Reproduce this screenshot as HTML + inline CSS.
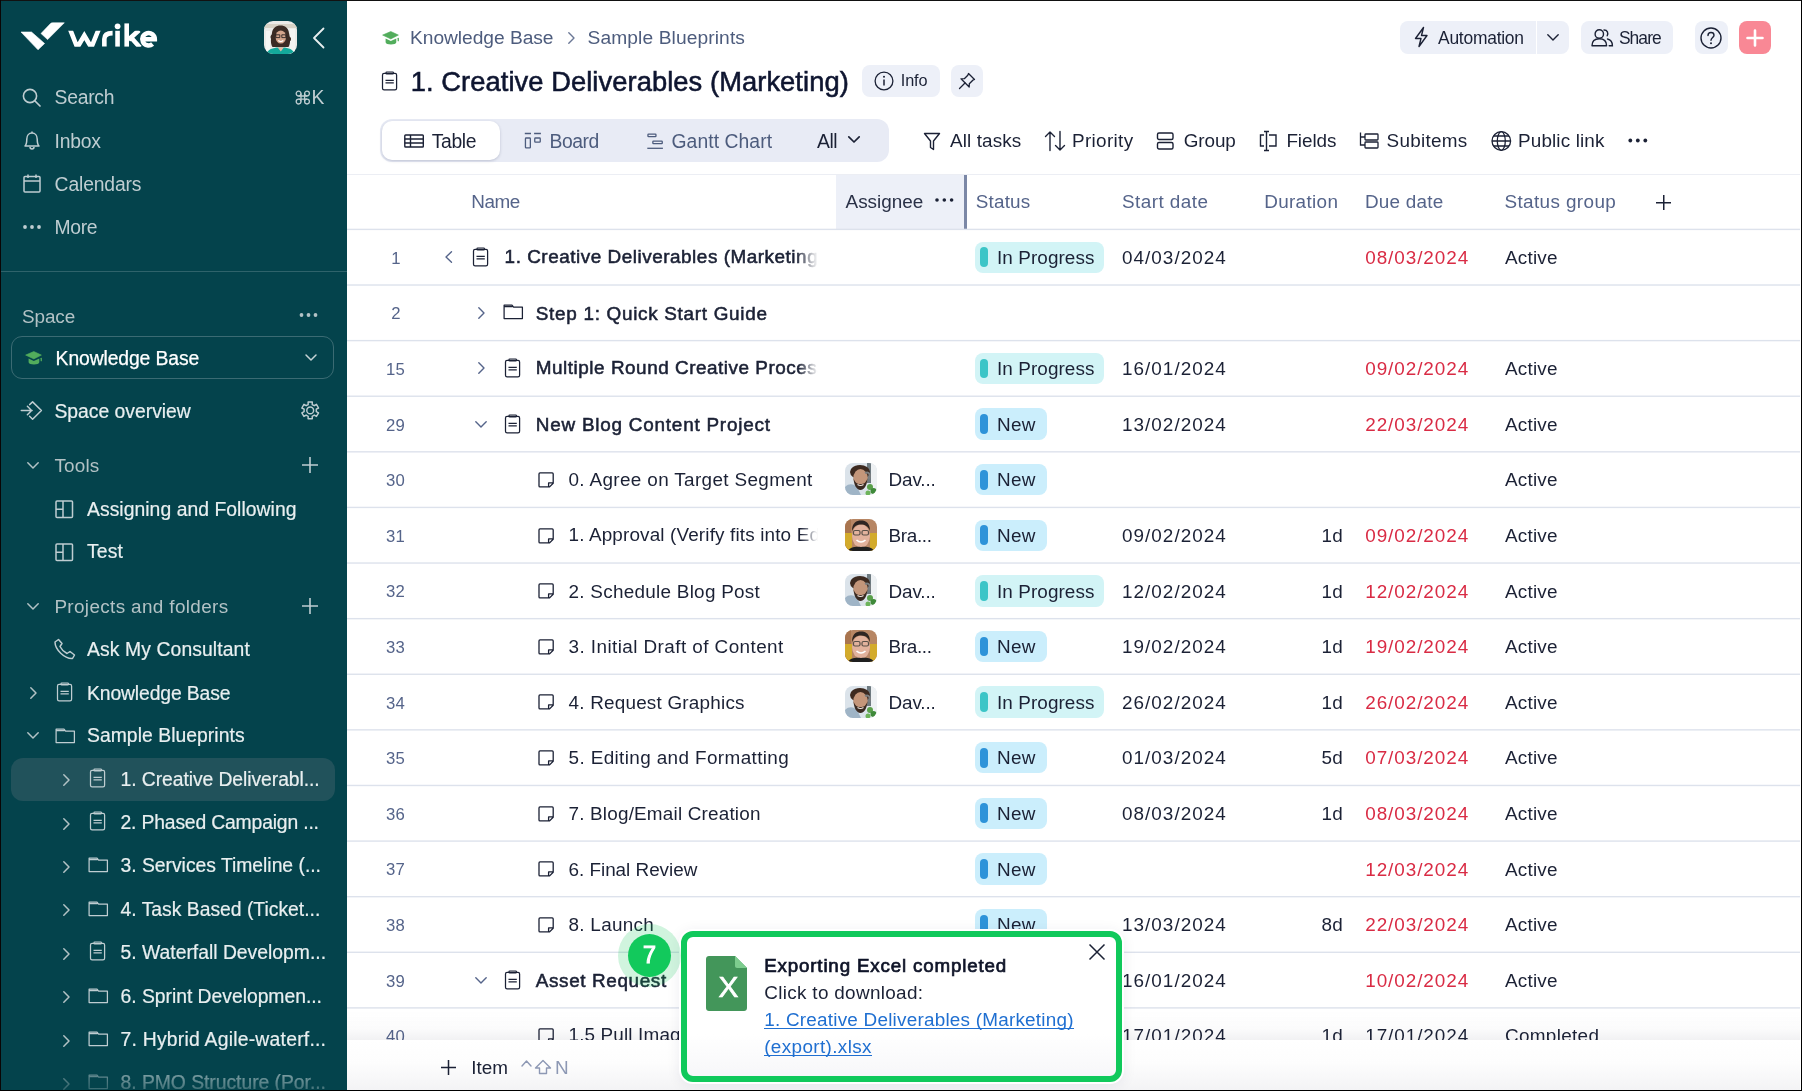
<!DOCTYPE html>
<html><head><meta charset="utf-8"><style>
html,body{margin:0;padding:0;}
body{width:1802px;height:1091px;position:relative;overflow:hidden;background:#fff;font-family:"Liberation Sans",sans-serif;}
.t{position:absolute;white-space:nowrap;line-height:1;}
.r{position:absolute;}
#w{position:absolute;left:0;top:0;width:1802px;height:1091px;overflow:hidden;will-change:transform;}
</style></head><body><div id="w">
<div class="r" style="left:0px;top:0px;width:347px;height:1091px;background:#04434c;"></div>
<div class="r" style="left:0px;top:271px;width:347px;height:1.1999999999999886px;background:#2f636b;"></div>
<svg class="r" style="left:20px;top:21px;" width="46" height="30" viewBox="0 0 46 30" fill="none"><path d="M1 11 H11.5 L24.6 22.5 L18 28.8 Z" fill="#fff" stroke="#fff" stroke-width="0.6" stroke-linejoin="round"/><path d="M21 12.5 L30.5 2.6 Q31.2 1.8 32.5 1.8 H44.3 L27.6 18.6 Z" fill="#fff" stroke="#fff" stroke-width="0.6" stroke-linejoin="round"/></svg>
<svg class="r" style="left:64px;top:18px;" width="98" height="34" viewBox="0 0 98 34" fill="none"><defs><clipPath id="wc"><rect x="0" y="12.7" width="98" height="16"/></clipPath></defs><g stroke="#fff" stroke-width="4.6" fill="none"><path clip-path="url(#wc)" d="M5.8 10.5 L13.3 29.5 L20.3 17.5 L27.3 29.5 L35 10.5" stroke-linejoin="miter" stroke-miterlimit="4"/><path d="M40.35 28.6 V21 Q40.35 15.1 48.6 15.1"/><path d="M53.55 12.8 V28.6"/><path d="M62.7 5.4 V28.6"/><path clip-path="url(#wc)" d="M64.5 21.8 L75 12.2 M66.8 19.3 L76 29.5"/><path d="M79.3 21.3 H90.8 A6.25 6.25 0 1 0 88.6 26" /></g><circle cx="53.6" cy="8.3" r="2.9" fill="#fff"/></svg>
<svg class="r" style="left:264px;top:21px;" width="33" height="33" viewBox="0 0 33 33" fill="none"><defs><clipPath id="ua"><rect width="33" height="33" rx="9"/></clipPath></defs><g clip-path="url(#ua)"><rect width="33" height="33" fill="#ecebe8"/><rect x="0" y="3" width="33" height="4" fill="#d8d2c6"/><rect x="2" y="10" width="4" height="20" fill="#f6f6f4"/><rect x="26" y="8" width="5" height="25" fill="#f4f4f2"/><path d="M8.5 26 C6 22 7 17 8 12 C8.5 7 12 4.5 16.5 4.5 C21 4.5 24.5 7 25 12 C26 17 27 22 24.5 26 Z" fill="#3b2b24"/><circle cx="9" cy="16" r="2.5" fill="#3b2b24"/><circle cx="24.5" cy="18" r="2.5" fill="#3b2b24"/><ellipse cx="16.8" cy="16" rx="5.2" ry="6.6" fill="#d4a58c"/><path d="M11.8 13.8 H15.8 V16.6 H11.8 Z M17.8 13.8 H21.8 V16.6 H17.8 Z" stroke="#2a2222" stroke-width="0.9" fill="none"/><path d="M14.3 19.6 Q16.8 21.6 19.3 19.6" stroke="#fff" stroke-width="1.3" fill="none"/><path d="M2 33 C4 28 10 26 16.8 26.5 C23.5 26 29 28 31 33 Z" fill="#14a99b"/><path d="M13.5 26.3 L16.8 30.5 L20 26.3 Z" fill="#e2bba6"/></g></svg>
<svg class="r" style="left:311px;top:27px;" width="15" height="22" viewBox="0 0 15 22" fill="none"><path d="M12.5 1.5 L3 11 L12.5 20.5" stroke="#e8eeef" stroke-width="1.8" stroke-linecap="round" stroke-linejoin="round"/></svg>
<svg class="r" style="left:22px;top:88px;" width="20" height="20" viewBox="0 0 20 20" fill="none"><circle cx="8" cy="8" r="6.6" stroke="#bfcdd1" stroke-width="1.6"/><path d="M13 13 L18 18" stroke="#bfcdd1" stroke-width="1.7" stroke-linecap="round"/></svg>
<div class="t" style="left:54.60px;top:88.00px;font-size:19.33px;color:#bfcdd1;letter-spacing:-0.280px;">Search</div>
<svg class="r" style="left:294.5px;top:89.5px;" width="16" height="16" viewBox="0 0 16 16" fill="none"><g stroke="#bfcdd1" stroke-width="1.3" fill="none"><circle cx="3.6" cy="3.6" r="2.4"/><circle cx="12" cy="3.6" r="2.4"/><circle cx="3.6" cy="11.6" r="2.4"/><circle cx="12" cy="11.6" r="2.4"/><path d="M6 3.6 V11.6 M9.6 3.6 V11.6 M3.6 6 H12 M3.6 9.2 H12"/></g></svg>
<div class="t" style="left:311.40px;top:88.00px;font-size:19.33px;color:#bfcdd1;">K</div>
<svg class="r" style="left:22px;top:130px;" width="20" height="22" viewBox="0 0 20 22" fill="none"><path d="M3 16 C4.6 14.5 4.8 12.5 4.8 9 C4.8 5.5 7 3 10 3 C13 3 15.2 5.5 15.2 9 C15.2 12.5 15.4 14.5 17 16 Z" stroke="#bfcdd1" stroke-width="1.5" stroke-linejoin="round"/><path d="M8 17 C8 19.5 12 19.5 12 17" stroke="#bfcdd1" stroke-width="1.5"/><path d="M10 1.5 V3" stroke="#bfcdd1" stroke-width="1.5"/></svg>
<div class="t" style="left:54.60px;top:132.00px;font-size:19.33px;color:#bfcdd1;letter-spacing:-0.225px;">Inbox</div>
<svg class="r" style="left:22px;top:173px;" width="20" height="22" viewBox="0 0 20 22" fill="none"><rect x="2" y="3.5" width="16" height="15.5" rx="1" stroke="#bfcdd1" stroke-width="1.5"/><path d="M2 8 H18 M6 1.5 V5 M14 1.5 V5" stroke="#bfcdd1" stroke-width="1.5"/></svg>
<div class="t" style="left:54.60px;top:175.00px;font-size:19.33px;color:#bfcdd1;letter-spacing:-0.150px;">Calendars</div>
<svg class="r" style="left:22px;top:220px;" width="20" height="14" viewBox="0 0 20 14" fill="none"><circle cx="3" cy="7" r="1.9" fill="#bfcdd1"/><circle cx="10" cy="7" r="1.9" fill="#bfcdd1"/><circle cx="17" cy="7" r="1.9" fill="#bfcdd1"/></svg>
<div class="t" style="left:54.60px;top:218.00px;font-size:19.33px;color:#bfcdd1;letter-spacing:-0.367px;">More</div>
<div class="t" style="left:22.00px;top:308.00px;font-size:18.90px;color:#b3c2c5;letter-spacing:-0.100px;">Space</div>
<svg class="r" style="left:298px;top:309px;" width="22" height="12" viewBox="0 0 22 12" fill="none"><circle cx="3.5" cy="6" r="1.9" fill="#b3c2c5"/><circle cx="10.5" cy="6" r="1.9" fill="#b3c2c5"/><circle cx="17.5" cy="6" r="1.9" fill="#b3c2c5"/></svg>
<div class="r" style="left:11px;top:336px;width:321px;height:41px;border:1.4px solid #3b6b73;border-radius:11px;"></div>
<svg class="r" style="left:24.6px;top:350.5px;" width="18" height="15" viewBox="0 0 18 15" fill="none"><path d="M0.6 4.1 L8.8 0.5 L16.4 4.1 L8.8 7.9 Z" fill="#52ad5c" stroke="#52ad5c" stroke-width="0.6" stroke-linejoin="round"/><path d="M3.6 7.6 L8.8 10.1 L14.3 7.6 V11.3 C14.3 14.2 3.6 14.2 3.6 11.3 Z" fill="#52ad5c"/><rect x="15.6" y="6.7" width="1.3" height="3.6" rx="0.6" fill="#52ad5c"/></svg>
<div class="t" style="left:55.60px;top:349.00px;font-size:19.33px;color:#ffffff;-webkit-text-stroke:0.25px #ffffff;letter-spacing:-0.108px;">Knowledge Base</div>
<svg class="r" style="left:304px;top:353px;" width="14" height="9" viewBox="0 0 14 9" fill="none"><path d="M2 2 L7 7 L12 2" stroke="#c6d3d5" stroke-width="1.5" stroke-linecap="round" stroke-linejoin="round"/></svg>
<svg class="r" style="left:20px;top:400px;" width="23" height="21" viewBox="0 0 23 21" fill="none"><path d="M9.6 4.6 L12.6 1.9 L21.4 10.5 L12.6 19.2 L9.6 16.3 M1.3 10.5 H12.1 M7.4 6.3 L11.6 10.5 L7.4 14.7" stroke="#bfcdd1" stroke-width="1.5" stroke-linecap="round" stroke-linejoin="round"/></svg>
<div class="t" style="left:54.40px;top:402.00px;font-size:19.33px;color:#e9eff0;-webkit-text-stroke:0.2px #e9eff0;">Space overview</div>
<svg class="r" style="left:299px;top:400px;" width="23" height="22" viewBox="0 0 23 22" fill="none"><circle cx="11.2" cy="10.4" r="3.4" stroke="#bfcdd1" stroke-width="1.5"/><path d="M13.22 4.54 L13.30 1.96 L9.10 1.96 L9.18 4.54 L7.13 5.72 L4.94 4.36 L2.84 8.00 L5.11 9.22 L5.11 11.58 L2.84 12.80 L4.94 16.44 L7.13 15.08 L9.18 16.26 L9.10 18.84 L13.30 18.84 L13.22 16.26 L15.27 15.08 L17.46 16.44 L19.56 12.80 L17.29 11.58 L17.29 9.22 L19.56 8.00 L17.46 4.36 L15.27 5.72 Z" stroke="#bfcdd1" stroke-width="1.45" stroke-linejoin="round"/></svg>
<svg class="r" style="left:25.5px;top:461px;" width="14" height="9" viewBox="0 0 14 9" fill="none"><path d="M1.8 1.8 L7 7 L12.2 1.8" stroke="#b3c2c5" stroke-width="1.5" stroke-linecap="round" stroke-linejoin="round"/></svg>
<div class="t" style="left:54.40px;top:457.00px;font-size:18.90px;color:#b3c2c5;letter-spacing:0.200px;">Tools</div>
<svg class="r" style="left:302px;top:456.5px;" width="16" height="16" viewBox="0 0 16 16" fill="none"><path d="M8.0 0 V16 M0 8.0 H16" stroke="#bfcdd1" stroke-width="1.6"/></svg>
<svg class="r" style="left:54.5px;top:500px;" width="19" height="19" viewBox="0 0 19 19" fill="none"><rect x="1" y="1" width="16.5" height="16.5" rx="1" stroke="#bfcdd1" stroke-width="1.5"/><path d="M8 1 V17.5 M1 9.3 H8" stroke="#bfcdd1" stroke-width="1.5"/></svg>
<div class="t" style="left:87.00px;top:500.00px;font-size:19.33px;color:#e9eff0;-webkit-text-stroke:0.2px #e9eff0;letter-spacing:0.045px;">Assigning and Following</div>
<svg class="r" style="left:54.5px;top:543px;" width="19" height="19" viewBox="0 0 19 19" fill="none"><rect x="1" y="1" width="16.5" height="16.5" rx="1" stroke="#bfcdd1" stroke-width="1.5"/><path d="M8 1 V17.5 M1 9.3 H8" stroke="#bfcdd1" stroke-width="1.5"/></svg>
<div class="t" style="left:87.00px;top:542.00px;font-size:19.33px;color:#e9eff0;-webkit-text-stroke:0.2px #e9eff0;letter-spacing:0.167px;">Test</div>
<svg class="r" style="left:25.5px;top:602px;" width="14" height="9" viewBox="0 0 14 9" fill="none"><path d="M1.8 1.8 L7 7 L12.2 1.8" stroke="#b3c2c5" stroke-width="1.5" stroke-linecap="round" stroke-linejoin="round"/></svg>
<div class="t" style="left:54.40px;top:598.00px;font-size:18.90px;color:#b3c2c5;letter-spacing:0.358px;">Projects and folders</div>
<svg class="r" style="left:302px;top:597.5px;" width="16" height="16" viewBox="0 0 16 16" fill="none"><path d="M8.0 0 V16 M0 8.0 H16" stroke="#bfcdd1" stroke-width="1.6"/></svg>
<svg class="r" style="left:53px;top:638px;" width="24" height="23" viewBox="0 0 24 23" fill="none"><path d="M5.5 1.5 L9 5.5 L7 8.5 C8.5 11.5 11 14 14 15.5 L17 13.5 L21.5 17 L19.5 20.5 C11.5 21 2 11.5 2 4 Z" stroke="#bfcdd1" stroke-width="1.5" stroke-linejoin="round"/></svg>
<div class="t" style="left:87.00px;top:640.00px;font-size:19.33px;color:#e9eff0;-webkit-text-stroke:0.2px #e9eff0;letter-spacing:0.106px;">Ask My Consultant</div>
<svg class="r" style="left:29px;top:686px;" width="9" height="14" viewBox="0 0 9 14" fill="none"><path d="M1.8 1.8 L7 7 L1.8 12.2" stroke="#b3c2c5" stroke-width="1.5" stroke-linecap="round" stroke-linejoin="round"/></svg>
<svg class="r" style="left:55.5px;top:681.5px;" width="17" height="20" viewBox="0 0 17 20" fill="none"><rect x="1.5" y="2.4" width="14.1" height="16.4" rx="1.6" stroke="#bfcdd1" stroke-width="1.25"/><rect x="5" y="1" width="7.4" height="2" rx="0.7" stroke="#bfcdd1" stroke-width="1.2"/><path d="M4.5 9.3 H12.8 M4.5 11.8 H12.8" stroke="#bfcdd1" stroke-width="1.2"/></svg>
<div class="t" style="left:87.00px;top:684.00px;font-size:19.33px;color:#e9eff0;-webkit-text-stroke:0.2px #e9eff0;letter-spacing:-0.123px;">Knowledge Base</div>
<svg class="r" style="left:25.5px;top:731px;" width="14" height="9" viewBox="0 0 14 9" fill="none"><path d="M1.8 1.8 L7 7 L12.2 1.8" stroke="#b3c2c5" stroke-width="1.5" stroke-linecap="round" stroke-linejoin="round"/></svg>
<svg class="r" style="left:54.5px;top:727.5px;" width="21" height="16.5" viewBox="0 0 21 16.5" fill="none"><path d="M1.1 14.6 V1.2 H9 L10.6 3.1 H19.4 V14.6 Z M1.1 2.7 H9.6" stroke="#bfcdd1" stroke-width="1.25" stroke-linejoin="round"/></svg>
<div class="t" style="left:87.00px;top:726.00px;font-size:19.33px;color:#e9eff0;-webkit-text-stroke:0.2px #e9eff0;letter-spacing:0.044px;">Sample Blueprints</div>
<div class="r" style="left:11px;top:758px;width:324px;height:43px;background:#21525b;border-radius:12px;"></div>
<svg class="r" style="left:61.5px;top:773.1px;" width="9" height="14" viewBox="0 0 9 14" fill="none"><path d="M1.8 1.8 L7 7 L1.8 12.2" stroke="#b3c2c5" stroke-width="1.5" stroke-linecap="round" stroke-linejoin="round"/></svg>
<svg class="r" style="left:88.5px;top:767.6px;" width="17" height="20" viewBox="0 0 17 20" fill="none"><rect x="1.5" y="2.4" width="14.1" height="16.4" rx="1.6" stroke="#bfcdd1" stroke-width="1.25"/><rect x="5" y="1" width="7.4" height="2" rx="0.7" stroke="#bfcdd1" stroke-width="1.2"/><path d="M4.5 9.3 H12.8 M4.5 11.8 H12.8" stroke="#bfcdd1" stroke-width="1.2"/></svg>
<div class="t" style="left:120.50px;top:770.00px;font-size:19.33px;color:#e9eff0;-webkit-text-stroke:0.2px #e9eff0;letter-spacing:-0.071px;">1. Creative Deliverabl...</div>
<svg class="r" style="left:61.5px;top:816.5px;" width="9" height="14" viewBox="0 0 9 14" fill="none"><path d="M1.8 1.8 L7 7 L1.8 12.2" stroke="#b3c2c5" stroke-width="1.5" stroke-linecap="round" stroke-linejoin="round"/></svg>
<svg class="r" style="left:88.5px;top:811.0px;" width="17" height="20" viewBox="0 0 17 20" fill="none"><rect x="1.5" y="2.4" width="14.1" height="16.4" rx="1.6" stroke="#bfcdd1" stroke-width="1.25"/><rect x="5" y="1" width="7.4" height="2" rx="0.7" stroke="#bfcdd1" stroke-width="1.2"/><path d="M4.5 9.3 H12.8 M4.5 11.8 H12.8" stroke="#bfcdd1" stroke-width="1.2"/></svg>
<div class="t" style="left:120.50px;top:813.00px;font-size:19.33px;color:#e9eff0;-webkit-text-stroke:0.2px #e9eff0;letter-spacing:-0.167px;">2. Phased Campaign ...</div>
<svg class="r" style="left:61.5px;top:859.9px;" width="9" height="14" viewBox="0 0 9 14" fill="none"><path d="M1.8 1.8 L7 7 L1.8 12.2" stroke="#b3c2c5" stroke-width="1.5" stroke-linecap="round" stroke-linejoin="round"/></svg>
<svg class="r" style="left:87.5px;top:857.4px;" width="21" height="16.5" viewBox="0 0 21 16.5" fill="none"><path d="M1.1 14.6 V1.2 H9 L10.6 3.1 H19.4 V14.6 Z M1.1 2.7 H9.6" stroke="#bfcdd1" stroke-width="1.25" stroke-linejoin="round"/></svg>
<div class="t" style="left:120.50px;top:856.00px;font-size:19.33px;color:#e9eff0;-webkit-text-stroke:0.2px #e9eff0;letter-spacing:-0.017px;">3. Services Timeline (...</div>
<svg class="r" style="left:61.5px;top:903.3px;" width="9" height="14" viewBox="0 0 9 14" fill="none"><path d="M1.8 1.8 L7 7 L1.8 12.2" stroke="#b3c2c5" stroke-width="1.5" stroke-linecap="round" stroke-linejoin="round"/></svg>
<svg class="r" style="left:87.5px;top:900.8px;" width="21" height="16.5" viewBox="0 0 21 16.5" fill="none"><path d="M1.1 14.6 V1.2 H9 L10.6 3.1 H19.4 V14.6 Z M1.1 2.7 H9.6" stroke="#bfcdd1" stroke-width="1.25" stroke-linejoin="round"/></svg>
<div class="t" style="left:120.50px;top:900.00px;font-size:19.33px;color:#e9eff0;-webkit-text-stroke:0.2px #e9eff0;">4. Task Based (Ticket...</div>
<svg class="r" style="left:61.5px;top:946.7px;" width="9" height="14" viewBox="0 0 9 14" fill="none"><path d="M1.8 1.8 L7 7 L1.8 12.2" stroke="#b3c2c5" stroke-width="1.5" stroke-linecap="round" stroke-linejoin="round"/></svg>
<svg class="r" style="left:88.5px;top:941.2px;" width="17" height="20" viewBox="0 0 17 20" fill="none"><rect x="1.5" y="2.4" width="14.1" height="16.4" rx="1.6" stroke="#bfcdd1" stroke-width="1.25"/><rect x="5" y="1" width="7.4" height="2" rx="0.7" stroke="#bfcdd1" stroke-width="1.2"/><path d="M4.5 9.3 H12.8 M4.5 11.8 H12.8" stroke="#bfcdd1" stroke-width="1.2"/></svg>
<div class="t" style="left:120.50px;top:943.00px;font-size:19.33px;color:#e9eff0;-webkit-text-stroke:0.2px #e9eff0;">5. Waterfall Developm...</div>
<svg class="r" style="left:61.5px;top:990.1px;" width="9" height="14" viewBox="0 0 9 14" fill="none"><path d="M1.8 1.8 L7 7 L1.8 12.2" stroke="#b3c2c5" stroke-width="1.5" stroke-linecap="round" stroke-linejoin="round"/></svg>
<svg class="r" style="left:87.5px;top:987.6px;" width="21" height="16.5" viewBox="0 0 21 16.5" fill="none"><path d="M1.1 14.6 V1.2 H9 L10.6 3.1 H19.4 V14.6 Z M1.1 2.7 H9.6" stroke="#bfcdd1" stroke-width="1.25" stroke-linejoin="round"/></svg>
<div class="t" style="left:120.50px;top:987.00px;font-size:19.33px;color:#e9eff0;-webkit-text-stroke:0.2px #e9eff0;letter-spacing:-0.023px;">6. Sprint Developmen...</div>
<svg class="r" style="left:61.5px;top:1033.5px;" width="9" height="14" viewBox="0 0 9 14" fill="none"><path d="M1.8 1.8 L7 7 L1.8 12.2" stroke="#b3c2c5" stroke-width="1.5" stroke-linecap="round" stroke-linejoin="round"/></svg>
<svg class="r" style="left:87.5px;top:1031.0px;" width="21" height="16.5" viewBox="0 0 21 16.5" fill="none"><path d="M1.1 14.6 V1.2 H9 L10.6 3.1 H19.4 V14.6 Z M1.1 2.7 H9.6" stroke="#bfcdd1" stroke-width="1.25" stroke-linejoin="round"/></svg>
<div class="t" style="left:120.50px;top:1030.00px;font-size:19.33px;color:#e9eff0;-webkit-text-stroke:0.2px #e9eff0;letter-spacing:0.237px;">7. Hybrid Agile-waterf...</div>
<svg class="r" style="left:61.5px;top:1076.9px;" width="9" height="14" viewBox="0 0 9 14" fill="none"><path d="M1.8 1.8 L7 7 L1.8 12.2" stroke="#b3c2c5" stroke-width="1.5" stroke-linecap="round" stroke-linejoin="round"/></svg>
<svg class="r" style="left:87.5px;top:1074.4px;" width="21" height="16.5" viewBox="0 0 21 16.5" fill="none"><path d="M1.1 14.6 V1.2 H9 L10.6 3.1 H19.4 V14.6 Z M1.1 2.7 H9.6" stroke="#bfcdd1" stroke-width="1.25" stroke-linejoin="round"/></svg>
<div class="t" style="left:120.50px;top:1073.00px;font-size:19.33px;color:#e9eff0;-webkit-text-stroke:0.2px #e9eff0;letter-spacing:-0.035px;">8. PMO Structure (Por...</div>
<div class="r" style="left:1px;top:1045px;width:346px;height:46px;background:linear-gradient(180deg,rgba(4,67,76,0) 0%,rgba(4,67,76,0.75) 100%);"></div>
<svg class="r" style="left:381.5px;top:30.5px;" width="18" height="15" viewBox="0 0 18 15" fill="none"><path d="M0.6 4.1 L8.8 0.5 L16.4 4.1 L8.8 7.9 Z" fill="#52ad5c" stroke="#52ad5c" stroke-width="0.6" stroke-linejoin="round"/><path d="M3.6 7.6 L8.8 10.1 L14.3 7.6 V11.3 C14.3 14.2 3.6 14.2 3.6 11.3 Z" fill="#52ad5c"/><rect x="15.6" y="6.7" width="1.3" height="3.6" rx="0.6" fill="#52ad5c"/></svg>
<div class="t" style="left:410.00px;top:28.00px;font-size:19.19px;color:#4d5c7d;letter-spacing:-0.038px;">Knowledge Base</div>
<svg class="r" style="left:567px;top:31px;" width="9" height="14" viewBox="0 0 9 14" fill="none"><path d="M1.8 1.8 L7 7 L1.8 12.2" stroke="#6b7896" stroke-width="1.4" stroke-linecap="round" stroke-linejoin="round"/></svg>
<div class="t" style="left:587.50px;top:28.00px;font-size:19.19px;color:#4d5c7d;letter-spacing:0.106px;">Sample Blueprints</div>
<svg class="r" style="left:381px;top:70.5px;" width="17" height="21" viewBox="0 0 17 21" fill="none"><rect x="1.5" y="2.4" width="14.1" height="16.4" rx="1.6" stroke="#1b2135" stroke-width="1.25"/><rect x="5" y="1" width="7.4" height="2" rx="0.7" stroke="#1b2135" stroke-width="1.2"/><path d="M4.5 9.3 H12.8 M4.5 11.8 H12.8" stroke="#1b2135" stroke-width="1.2"/></svg>
<div class="t" style="left:410.70px;top:68.00px;font-size:27.33px;color:#0e1530;-webkit-text-stroke:0.55px #0e1530;letter-spacing:0.063px;">1. Creative Deliverables (Marketing)</div>
<div class="r" style="left:862px;top:65px;width:78px;height:32px;background:#edf0f8;border-radius:8px;"></div>
<svg class="r" style="left:874px;top:70.5px;" width="20" height="20" viewBox="0 0 20 20" fill="none"><circle cx="10" cy="10" r="8.9" stroke="#1b2135" stroke-width="1.3"/><path d="M10 8.5 V14.5" stroke="#1b2135" stroke-width="1.5"/><circle cx="10" cy="5.8" r="1" fill="#1b2135"/></svg>
<div class="t" style="left:900.80px;top:72.00px;font-size:16.28px;color:#1b2135;letter-spacing:-0.167px;">Info</div>
<div class="r" style="left:951px;top:65px;width:32px;height:32px;background:#edf0f8;border-radius:8px;"></div>
<svg class="r" style="left:957px;top:71px;" width="20" height="20" viewBox="0 0 20 20" fill="none"><path d="M11.5 2.5 L17.5 8.5 L15.8 9.2 L12.3 12.7 L12.2 16 L4 7.8 L7.3 7.7 L10.8 4.2 Z" stroke="#1b2135" stroke-width="1.3" stroke-linejoin="round"/><path d="M8 12 L2.5 17.5" stroke="#1b2135" stroke-width="1.3" stroke-linecap="round"/></svg>
<div class="r" style="left:1400px;top:21px;width:169px;height:33px;background:#edf0f8;border-radius:8px;"></div>
<div class="r" style="left:1535.6px;top:21px;width:1.6000000000001364px;height:33px;background:#ffffff;"></div>
<svg class="r" style="left:1412px;top:26px;" width="18" height="22" viewBox="0 0 18 22" fill="none"><path d="M11.5 1.5 L3.5 12.5 H9 L7 20.5 L15 9.5 H9.5 Z" stroke="#1b2135" stroke-width="1.4" stroke-linejoin="round"/></svg>
<div class="t" style="left:1438.00px;top:30.00px;font-size:17.44px;color:#1b2135;letter-spacing:-0.244px;">Automation</div>
<svg class="r" style="left:1546px;top:33px;" width="14" height="9" viewBox="0 0 14 9" fill="none"><path d="M1.8 1.8 L7 7 L12.2 1.8" stroke="#1b2135" stroke-width="1.4" stroke-linecap="round" stroke-linejoin="round"/></svg>
<div class="r" style="left:1581px;top:21px;width:92px;height:33px;background:#edf0f8;border-radius:8px;"></div>
<svg class="r" style="left:1591px;top:28px;" width="23" height="20" viewBox="0 0 23 20" fill="none"><circle cx="8.3" cy="6" r="4.2" stroke="#1b2135" stroke-width="1.4"/><path d="M1 17.8 C1 12.6 4 10.8 8.3 10.8 C12.6 10.8 15.6 12.6 15.6 17.8 Z" stroke="#1b2135" stroke-width="1.4" stroke-linejoin="round"/><path d="M13 2 C16.5 2 17.5 5 16.2 7.8 M16.5 11 C19.5 11.6 21.4 13.6 21.4 17.8 H18.2" stroke="#1b2135" stroke-width="1.4" stroke-linecap="round"/></svg>
<div class="t" style="left:1618.90px;top:30.00px;font-size:17.44px;color:#1b2135;letter-spacing:-0.925px;">Share</div>
<div class="r" style="left:1695px;top:21px;width:33px;height:33px;background:#edf0f8;border-radius:8px;"></div>
<svg class="r" style="left:1700px;top:27px;" width="22" height="22" viewBox="0 0 22 22" fill="none"><circle cx="11" cy="11" r="10" stroke="#1b2135" stroke-width="1.4"/><path d="M8 8.5 C8 6.5 9.3 5.5 11 5.5 C12.8 5.5 14 6.6 14 8.2 C14 10.4 11 10.6 11 13.3" stroke="#1b2135" stroke-width="1.4" stroke-linecap="round"/><circle cx="11" cy="16.3" r="1" fill="#1b2135"/></svg>
<div class="r" style="left:1739px;top:21px;width:32px;height:33px;background:#f98895;border-radius:8px;"></div>
<svg class="r" style="left:1746px;top:29px;" width="18" height="18" viewBox="0 0 18 18" fill="none"><path d="M9 1.5 V16.5 M1.5 9 H16.5" stroke="#fff" stroke-width="2.6" stroke-linecap="round"/></svg>
<div class="r" style="left:380px;top:119px;width:509px;height:43px;background:#e8ebf5;border-radius:12px;"></div>
<div class="r" style="left:382px;top:121px;width:117.5px;height:38.5px;background:#fff;border-radius:10px;box-shadow:0 1px 3px rgba(40,50,90,0.22);"></div>
<svg class="r" style="left:403px;top:133px;" width="22" height="16" viewBox="0 0 22 16" fill="none"><rect x="1.8" y="2" width="18.5" height="12" rx="0.8" stroke="#1b2135" stroke-width="1.4"/><path d="M1.8 6 H20.3 M1.8 10 H20.3 M7.5 2 V14" stroke="#1b2135" stroke-width="1.4"/></svg>
<div class="t" style="left:431.80px;top:132.00px;font-size:19.33px;color:#1b2135;letter-spacing:-0.375px;">Table</div>
<svg class="r" style="left:520px;top:128px;" width="24" height="24" viewBox="0 0 24 24" fill="none"><g stroke="#4d5c7d" stroke-width="1.3" fill="none"><path d="M4.8 5.5 H11 M14.1 5.5 H20.9"/><rect x="5.45" y="10" width="4.9" height="9.9" rx="0.7"/><rect x="14.75" y="10" width="5.5" height="4.2" rx="0.7"/></g></svg>
<div class="t" style="left:549.40px;top:132.00px;font-size:19.33px;color:#4d5c7d;letter-spacing:-0.400px;">Board</div>
<svg class="r" style="left:643px;top:128px;" width="24" height="24" viewBox="0 0 24 24" fill="none"><g stroke="#4d5c7d" stroke-width="1.3" fill="none"><rect x="4.95" y="6.05" width="8" height="2.5" rx="0.6"/><rect x="9.85" y="13.15" width="9.4" height="2.5" rx="0.6"/><path d="M4.3 20.3 H19.9"/></g></svg>
<div class="t" style="left:671.50px;top:132.00px;font-size:19.33px;color:#4d5c7d;letter-spacing:0.060px;">Gantt Chart</div>
<div class="t" style="left:817.00px;top:132.00px;font-size:19.33px;color:#1b2135;letter-spacing:-0.450px;">All</div>
<svg class="r" style="left:847px;top:135px;" width="14" height="9" viewBox="0 0 14 9" fill="none"><path d="M1.8 1.8 L7 7 L12.2 1.8" stroke="#1b2135" stroke-width="1.7" stroke-linecap="round" stroke-linejoin="round"/></svg>
<svg class="r" style="left:923px;top:132px;" width="18" height="19" viewBox="0 0 18 19" fill="none"><path d="M1.5 1.5 H16.5 L10.5 9 V17.5 L7.5 15.5 V9 Z" stroke="#1b2135" stroke-width="1.4" stroke-linejoin="round"/></svg>
<div class="t" style="left:950.00px;top:132.00px;font-size:18.90px;color:#1b2135;letter-spacing:0.112px;">All tasks</div>
<svg class="r" style="left:1044px;top:130px;" width="22" height="22" viewBox="0 0 22 22" fill="none"><path d="M6 20.5 V2 M1.5 6.5 L6 2 L10.5 6.5 M16 1.5 V20 M11.5 15.5 L16 20 L20.5 15.5" stroke="#1b2135" stroke-width="1.4" stroke-linecap="round" stroke-linejoin="round"/></svg>
<div class="t" style="left:1072.00px;top:132.00px;font-size:18.90px;color:#1b2135;letter-spacing:0.329px;">Priority</div>
<svg class="r" style="left:1156px;top:131px;" width="19" height="20" viewBox="0 0 19 20" fill="none"><rect x="1.5" y="2" width="15.5" height="6.5" rx="1.5" stroke="#1b2135" stroke-width="1.4"/><rect x="1.5" y="11.5" width="15.5" height="6.5" rx="1.5" stroke="#1b2135" stroke-width="1.4"/></svg>
<div class="t" style="left:1183.70px;top:132.00px;font-size:18.90px;color:#1b2135;letter-spacing:-0.100px;">Group</div>
<svg class="r" style="left:1259px;top:130px;" width="21" height="22" viewBox="0 0 21 22" fill="none"><path d="M5 5 H1.5 V16 H5 M10 5 H17 V16 H10 M7.5 1.5 V20.5 M5 1.5 H10 M5 20.5 H10" stroke="#1b2135" stroke-width="1.4"/></svg>
<div class="t" style="left:1286.40px;top:132.00px;font-size:18.90px;color:#1b2135;letter-spacing:-0.060px;">Fields</div>
<svg class="r" style="left:1359px;top:131px;" width="22" height="20" viewBox="0 0 22 20" fill="none"><path d="M1.5 1.5 V14 H6 M1.5 6 H6" stroke="#1b2135" stroke-width="1.3"/><rect x="6" y="3" width="13" height="6" rx="0.8" stroke="#1b2135" stroke-width="1.3"/><rect x="6" y="11" width="13" height="6" rx="0.8" stroke="#1b2135" stroke-width="1.3"/></svg>
<div class="t" style="left:1386.50px;top:132.00px;font-size:18.90px;color:#1b2135;letter-spacing:0.286px;">Subitems</div>
<svg class="r" style="left:1490px;top:130px;" width="23" height="22" viewBox="0 0 23 22" fill="none"><circle cx="11.3" cy="11" r="9.3" stroke="#1b2135" stroke-width="1.3"/><ellipse cx="11.3" cy="11" rx="4" ry="9.3" stroke="#1b2135" stroke-width="1.3"/><path d="M2 11 H20.6 M3.5 6 H19 M3.5 16 H19" stroke="#1b2135" stroke-width="1.3"/></svg>
<div class="t" style="left:1518.00px;top:132.00px;font-size:18.90px;color:#1b2135;letter-spacing:0.140px;">Public link</div>
<svg class="r" style="left:1627px;top:134px;" width="22" height="12" viewBox="0 0 22 12" fill="none"><circle cx="3.3" cy="6.5" r="1.9" fill="#1b2135"/><circle cx="10.8" cy="6.5" r="1.9" fill="#1b2135"/><circle cx="18.3" cy="6.5" r="1.9" fill="#1b2135"/></svg>
<div class="r" style="left:347px;top:173.5px;width:1454px;height:1.5px;background:#eceef4;"></div>
<div class="r" style="left:836px;top:175px;width:128px;height:54px;background:#edf0f8;"></div>
<div class="r" style="left:964px;top:175px;width:3px;height:54px;background:#7b87a6;"></div>
<div class="t" style="left:471.20px;top:193.00px;font-size:18.90px;color:#55648a;letter-spacing:-0.433px;">Name</div>
<div class="t" style="left:845.60px;top:193.00px;font-size:18.90px;color:#2a3147;letter-spacing:-0.014px;">Assignee</div>
<svg class="r" style="left:934px;top:195px;" width="21" height="10" viewBox="0 0 21 10" fill="none"><circle cx="3" cy="5" r="1.8" fill="#1b2135"/><circle cx="10.3" cy="5" r="1.8" fill="#1b2135"/><circle cx="17.6" cy="5" r="1.8" fill="#1b2135"/></svg>
<div class="t" style="left:975.80px;top:193.00px;font-size:18.90px;color:#55648a;letter-spacing:0.180px;">Status</div>
<div class="t" style="left:1121.90px;top:193.00px;font-size:18.90px;color:#55648a;letter-spacing:0.467px;">Start date</div>
<div class="t" style="left:1264.20px;top:193.00px;font-size:18.90px;color:#55648a;letter-spacing:0.329px;">Duration</div>
<div class="t" style="left:1365.00px;top:193.00px;font-size:18.90px;color:#55648a;letter-spacing:0.214px;">Due date</div>
<div class="t" style="left:1504.40px;top:193.00px;font-size:18.90px;color:#55648a;letter-spacing:0.391px;">Status group</div>
<svg class="r" style="left:1655.5px;top:194.5px;" width="15.5" height="15.5" viewBox="0 0 15.5 15.5" fill="none"><path d="M7.75 0 V15.5 M0 7.75 H15.5" stroke="#1b2135" stroke-width="1.5"/></svg>
<svg class="r" style="left:347px;top:0px" width="1454" height="1091"><rect x="0" y="228.70" width="1454" height="1.4" fill="#dde2ec"/><rect x="0" y="284.31" width="1454" height="1.4" fill="#dde2ec"/><rect x="0" y="339.91" width="1454" height="1.4" fill="#dde2ec"/><rect x="0" y="395.52" width="1454" height="1.4" fill="#dde2ec"/><rect x="0" y="451.13" width="1454" height="1.4" fill="#dde2ec"/><rect x="0" y="506.73" width="1454" height="1.4" fill="#dde2ec"/><rect x="0" y="562.34" width="1454" height="1.4" fill="#dde2ec"/><rect x="0" y="617.95" width="1454" height="1.4" fill="#dde2ec"/><rect x="0" y="673.56" width="1454" height="1.4" fill="#dde2ec"/><rect x="0" y="729.16" width="1454" height="1.4" fill="#dde2ec"/><rect x="0" y="784.77" width="1454" height="1.4" fill="#dde2ec"/><rect x="0" y="840.38" width="1454" height="1.4" fill="#dde2ec"/><rect x="0" y="895.98" width="1454" height="1.4" fill="#dde2ec"/><rect x="0" y="951.59" width="1454" height="1.4" fill="#dde2ec"/><rect x="0" y="1007.20" width="1454" height="1.4" fill="#dde2ec"/></svg>
<div class="t" style="left:391.35px;top:251.00px;font-size:16.72px;color:#55648a;">1</div>
<svg class="r" style="left:443px;top:250.2px;" width="11" height="14" viewBox="0 0 11 14" fill="none"><path d="M8.5 1.8 L3 7 L8.5 12.2" stroke="#55648a" stroke-width="1.4" stroke-linecap="round" stroke-linejoin="round"/></svg>
<svg class="r" style="left:471.5px;top:246.7px;" width="17" height="21" viewBox="0 0 17 21" fill="none"><rect x="1.5" y="2.4" width="14.1" height="16.4" rx="1.6" stroke="#1b2135" stroke-width="1.25"/><rect x="5" y="1" width="7.4" height="2" rx="0.7" stroke="#1b2135" stroke-width="1.2"/><path d="M4.5 9.3 H12.8 M4.5 11.8 H12.8" stroke="#1b2135" stroke-width="1.2"/></svg>
<div class="r" style="left:503.6px;top:237.2px;width:314.4px;height:40px;overflow:hidden;-webkit-mask-image:linear-gradient(90deg,#000 93%,transparent 100%);mask-image:linear-gradient(90deg,#000 93%,transparent 100%);"><div class="t" style="left:1px;top:10.80px;font-size:18.90px;color:#1b2135;-webkit-text-stroke:0.55px #1b2135;letter-spacing:0.53px;">1. Creative Deliverables (Marketing</div></div>
<div class="r" style="left:975px;top:241.5px;width:129px;height:31.399999999999977px;background:#d2f4f6;border-radius:8px;"></div>
<div class="r" style="left:980.2px;top:247.29999999999998px;width:8.199999999999932px;height:19.799999999999983px;background:#3cc5c7;border-radius:4px;"></div>
<div class="t" style="left:997.00px;top:249.00px;font-size:18.90px;color:#1b2135;letter-spacing:0.080px;">In Progress</div>
<div class="t" style="left:1122.00px;top:249.00px;font-size:18.90px;color:#1b2135;letter-spacing:1.022px;">04/03/2024</div>
<div class="t" style="left:1365.20px;top:249.00px;font-size:18.90px;color:#d92b44;letter-spacing:0.944px;">08/03/2024</div>
<div class="t" style="left:1505.00px;top:249.00px;font-size:18.90px;color:#1b2135;letter-spacing:0.200px;">Active</div>
<div class="t" style="left:391.35px;top:306.00px;font-size:16.72px;color:#55648a;">2</div>
<svg class="r" style="left:477px;top:305.807px;" width="10" height="14" viewBox="0 0 10 14" fill="none"><path d="M1.8 1.8 L7 7 L1.8 12.2" stroke="#55648a" stroke-width="1.4" stroke-linecap="round" stroke-linejoin="round"/></svg>
<svg class="r" style="left:503px;top:304.307px;" width="21" height="16.5" viewBox="0 0 21 16.5" fill="none"><path d="M1.1 14.6 V1.2 H9 L10.6 3.1 H19.4 V14.6 Z M1.1 2.7 H9.6" stroke="#1b2135" stroke-width="1.25" stroke-linejoin="round"/></svg>
<div class="t" style="left:535.80px;top:305.00px;font-size:18.90px;color:#1b2135;-webkit-text-stroke:0.55px #1b2135;letter-spacing:0.704px;">Step 1: Quick Start Guide</div>
<div class="t" style="left:386.10px;top:362.00px;font-size:16.72px;color:#55648a;letter-spacing:0.200px;">15</div>
<svg class="r" style="left:477px;top:361.414px;" width="10" height="14" viewBox="0 0 10 14" fill="none"><path d="M1.8 1.8 L7 7 L1.8 12.2" stroke="#55648a" stroke-width="1.4" stroke-linecap="round" stroke-linejoin="round"/></svg>
<svg class="r" style="left:503.5px;top:357.914px;" width="17" height="21" viewBox="0 0 17 21" fill="none"><rect x="1.5" y="2.4" width="14.1" height="16.4" rx="1.6" stroke="#1b2135" stroke-width="1.25"/><rect x="5" y="1" width="7.4" height="2" rx="0.7" stroke="#1b2135" stroke-width="1.2"/><path d="M4.5 9.3 H12.8 M4.5 11.8 H12.8" stroke="#1b2135" stroke-width="1.2"/></svg>
<div class="r" style="left:534.8px;top:348.414px;width:283.20000000000005px;height:40px;overflow:hidden;-webkit-mask-image:linear-gradient(90deg,#000 93%,transparent 100%);mask-image:linear-gradient(90deg,#000 93%,transparent 100%);"><div class="t" style="left:1px;top:10.80px;font-size:18.90px;color:#1b2135;-webkit-text-stroke:0.55px #1b2135;letter-spacing:0.53px;">Multiple Round Creative Process</div></div>
<div class="r" style="left:975px;top:352.714px;width:129px;height:31.399999999999977px;background:#d2f4f6;border-radius:8px;"></div>
<div class="r" style="left:980.2px;top:358.514px;width:8.199999999999932px;height:19.799999999999955px;background:#3cc5c7;border-radius:4px;"></div>
<div class="t" style="left:997.00px;top:360.00px;font-size:18.90px;color:#1b2135;letter-spacing:0.080px;">In Progress</div>
<div class="t" style="left:1122.00px;top:360.00px;font-size:18.90px;color:#1b2135;letter-spacing:1.022px;">16/01/2024</div>
<div class="t" style="left:1365.20px;top:360.00px;font-size:18.90px;color:#d92b44;letter-spacing:0.944px;">09/02/2024</div>
<div class="t" style="left:1505.00px;top:360.00px;font-size:18.90px;color:#1b2135;letter-spacing:0.200px;">Active</div>
<div class="t" style="left:386.10px;top:418.00px;font-size:16.72px;color:#55648a;letter-spacing:0.200px;">29</div>
<svg class="r" style="left:474px;top:419.52099999999996px;" width="14" height="9" viewBox="0 0 14 9" fill="none"><path d="M1.8 1.8 L7 7 L12.2 1.8" stroke="#55648a" stroke-width="1.4" stroke-linecap="round" stroke-linejoin="round"/></svg>
<svg class="r" style="left:503.5px;top:413.52099999999996px;" width="17" height="21" viewBox="0 0 17 21" fill="none"><rect x="1.5" y="2.4" width="14.1" height="16.4" rx="1.6" stroke="#1b2135" stroke-width="1.25"/><rect x="5" y="1" width="7.4" height="2" rx="0.7" stroke="#1b2135" stroke-width="1.2"/><path d="M4.5 9.3 H12.8 M4.5 11.8 H12.8" stroke="#1b2135" stroke-width="1.2"/></svg>
<div class="t" style="left:535.80px;top:416.00px;font-size:18.90px;color:#1b2135;-webkit-text-stroke:0.55px #1b2135;letter-spacing:0.774px;">New Blog Content Project</div>
<div class="r" style="left:975px;top:408.32099999999997px;width:71.5px;height:31.399999999999977px;background:#cbeefc;border-radius:8px;"></div>
<div class="r" style="left:980.2px;top:414.121px;width:8.199999999999932px;height:19.799999999999955px;background:#2e93d9;border-radius:4px;"></div>
<div class="t" style="left:997.00px;top:416.00px;font-size:18.90px;color:#1b2135;letter-spacing:0.300px;">New</div>
<div class="t" style="left:1122.00px;top:416.00px;font-size:18.90px;color:#1b2135;letter-spacing:1.022px;">13/02/2024</div>
<div class="t" style="left:1365.20px;top:416.00px;font-size:18.90px;color:#d92b44;letter-spacing:0.944px;">22/03/2024</div>
<div class="t" style="left:1505.00px;top:416.00px;font-size:18.90px;color:#1b2135;letter-spacing:0.200px;">Active</div>
<div class="t" style="left:386.10px;top:473.00px;font-size:16.72px;color:#55648a;letter-spacing:0.200px;">30</div>
<svg class="r" style="left:537px;top:470.928px;" width="17.5" height="17.5" viewBox="0 0 17.5 17.5" fill="none"><path d="M3 1.9 H15.2 Q16.2 1.9 16.2 2.9 V12.3 L12.6 15.9 H3 Q2 15.9 2 14.9 V2.9 Q2 1.9 3 1.9 Z M16.2 11.9 H11.6 V15.9" stroke="#1b2135" stroke-width="1.3" stroke-linejoin="round"/></svg>
<div class="t" style="left:568.50px;top:471.00px;font-size:18.90px;color:#1b2135;letter-spacing:0.356px;">0. Agree on Target Segment</div>
<svg class="r" style="left:845px;top:463.128px;" width="32" height="32" viewBox="0 0 32 32" fill="none"><defs><clipPath id="cd0"><rect x="0" y="0" width="32" height="32" rx="8"/></clipPath></defs><g clip-path="url(#cd0)"><rect width="32" height="32" fill="#dbe3ea"/><rect x="22" y="0" width="4" height="20" fill="#6e7a80"/><rect x="26" y="0" width="6" height="32" fill="#eef1f3"/><path d="M0 24 C4 20 9 21 12 24 L16 32 H0 Z" fill="#9fb4c6"/><ellipse cx="15" cy="9" rx="10" ry="7" fill="#3d2a20"/><ellipse cx="15.5" cy="15" rx="7.2" ry="9" fill="#c4967a"/><path d="M8.5 15 C9 23 12 27 15.5 27 C19 27 22 23 22.5 15 C21 20 19 21 15.5 21 C12 21 10 20 8.5 15 Z" fill="#3a2a22"/><path d="M12.5 21.5 Q15.5 23.5 18.5 21.5" stroke="#f2e6de" stroke-width="1.2" fill="none"/><path d="M20 10 C24 8 26 12 24 16" stroke="#7d7f80" stroke-width="2" fill="none"/><circle cx="25" cy="24" r="3" fill="#5aa04a"/><circle cx="28.5" cy="28" r="3" fill="#3f8a3a"/><circle cx="23" cy="30" r="2.5" fill="#6db35a"/></g></svg>
<div class="t" style="left:888.60px;top:471.00px;font-size:18.90px;color:#1b2135;letter-spacing:-0.160px;">Dav...</div>
<div class="r" style="left:975px;top:463.928px;width:71.5px;height:31.399999999999977px;background:#cbeefc;border-radius:8px;"></div>
<div class="r" style="left:980.2px;top:469.728px;width:8.199999999999932px;height:19.799999999999955px;background:#2e93d9;border-radius:4px;"></div>
<div class="t" style="left:997.00px;top:471.00px;font-size:18.90px;color:#1b2135;letter-spacing:0.300px;">New</div>
<div class="t" style="left:1505.00px;top:471.00px;font-size:18.90px;color:#1b2135;letter-spacing:0.200px;">Active</div>
<div class="t" style="left:386.10px;top:529.00px;font-size:16.72px;color:#55648a;letter-spacing:0.200px;">31</div>
<svg class="r" style="left:537px;top:526.5349999999999px;" width="17.5" height="17.5" viewBox="0 0 17.5 17.5" fill="none"><path d="M3 1.9 H15.2 Q16.2 1.9 16.2 2.9 V12.3 L12.6 15.9 H3 Q2 15.9 2 14.9 V2.9 Q2 1.9 3 1.9 Z M16.2 11.9 H11.6 V15.9" stroke="#1b2135" stroke-width="1.3" stroke-linejoin="round"/></svg>
<div class="r" style="left:567.5px;top:515.2349999999999px;width:250.5px;height:40px;overflow:hidden;-webkit-mask-image:linear-gradient(90deg,#000 93%,transparent 100%);mask-image:linear-gradient(90deg,#000 93%,transparent 100%);"><div class="t" style="left:1px;top:10.80px;font-size:18.90px;color:#1b2135;letter-spacing:0.15px;">1. Approval (Verify fits into Editorial</div></div>
<svg class="r" style="left:845px;top:518.7349999999999px;" width="32" height="32" viewBox="0 0 32 32" fill="none"><defs><clipPath id="cd1"><rect x="0" y="0" width="32" height="32" rx="8"/></clipPath></defs><g clip-path="url(#cd1)"><rect width="32" height="32" fill="#b78664"/><rect x="0" y="0" width="6" height="32" fill="#a9754f"/><path d="M0 14 H7 V32 H0 Z M25 14 H32 V32 H25 Z" fill="#d3ab2c"/><ellipse cx="16" cy="17" rx="9" ry="11.5" fill="#e2b29d"/><path d="M7 12 C7 4 11 1.5 16 1.5 C21 1.5 25 4 25 12 C23 7 20 5.5 16 5.5 C12 5.5 9 7 7 12 Z" fill="#2e2522"/><rect x="8.5" y="11.5" width="6.5" height="4.5" rx="1.5" stroke="#5a5048" stroke-width="1.2" fill="none"/><rect x="17" y="11.5" width="6.5" height="4.5" rx="1.5" stroke="#5a5048" stroke-width="1.2" fill="none"/><path d="M11.5 21 Q16 25 20.5 21" stroke="#fff" stroke-width="1.6" fill="none"/><path d="M3 32 C5 28 10 27.5 16 28 C22 27.5 27 28 29 32 Z" fill="#1f1f1f"/></g></svg>
<div class="t" style="left:888.60px;top:527.00px;font-size:18.90px;color:#1b2135;letter-spacing:-0.360px;">Bra...</div>
<div class="r" style="left:975px;top:519.5349999999999px;width:71.5px;height:31.40000000000009px;background:#cbeefc;border-radius:8px;"></div>
<div class="r" style="left:980.2px;top:525.3349999999999px;width:8.199999999999932px;height:19.799999999999955px;background:#2e93d9;border-radius:4px;"></div>
<div class="t" style="left:997.00px;top:527.00px;font-size:18.90px;color:#1b2135;letter-spacing:0.300px;">New</div>
<div class="t" style="left:1122.00px;top:527.00px;font-size:18.90px;color:#1b2135;letter-spacing:1.022px;">09/02/2024</div>
<div class="t" style="left:1321.40px;top:527.00px;font-size:18.90px;color:#1b2135;letter-spacing:0.400px;">1d</div>
<div class="t" style="left:1365.20px;top:527.00px;font-size:18.90px;color:#d92b44;letter-spacing:0.944px;">09/02/2024</div>
<div class="t" style="left:1505.00px;top:527.00px;font-size:18.90px;color:#1b2135;letter-spacing:0.200px;">Active</div>
<div class="t" style="left:386.10px;top:584.00px;font-size:16.72px;color:#55648a;letter-spacing:0.200px;">32</div>
<svg class="r" style="left:537px;top:582.1419999999999px;" width="17.5" height="17.5" viewBox="0 0 17.5 17.5" fill="none"><path d="M3 1.9 H15.2 Q16.2 1.9 16.2 2.9 V12.3 L12.6 15.9 H3 Q2 15.9 2 14.9 V2.9 Q2 1.9 3 1.9 Z M16.2 11.9 H11.6 V15.9" stroke="#1b2135" stroke-width="1.3" stroke-linejoin="round"/></svg>
<div class="t" style="left:568.50px;top:583.00px;font-size:18.90px;color:#1b2135;letter-spacing:0.270px;">2. Schedule Blog Post</div>
<svg class="r" style="left:845px;top:574.342px;" width="32" height="32" viewBox="0 0 32 32" fill="none"><defs><clipPath id="cd2"><rect x="0" y="0" width="32" height="32" rx="8"/></clipPath></defs><g clip-path="url(#cd2)"><rect width="32" height="32" fill="#dbe3ea"/><rect x="22" y="0" width="4" height="20" fill="#6e7a80"/><rect x="26" y="0" width="6" height="32" fill="#eef1f3"/><path d="M0 24 C4 20 9 21 12 24 L16 32 H0 Z" fill="#9fb4c6"/><ellipse cx="15" cy="9" rx="10" ry="7" fill="#3d2a20"/><ellipse cx="15.5" cy="15" rx="7.2" ry="9" fill="#c4967a"/><path d="M8.5 15 C9 23 12 27 15.5 27 C19 27 22 23 22.5 15 C21 20 19 21 15.5 21 C12 21 10 20 8.5 15 Z" fill="#3a2a22"/><path d="M12.5 21.5 Q15.5 23.5 18.5 21.5" stroke="#f2e6de" stroke-width="1.2" fill="none"/><path d="M20 10 C24 8 26 12 24 16" stroke="#7d7f80" stroke-width="2" fill="none"/><circle cx="25" cy="24" r="3" fill="#5aa04a"/><circle cx="28.5" cy="28" r="3" fill="#3f8a3a"/><circle cx="23" cy="30" r="2.5" fill="#6db35a"/></g></svg>
<div class="t" style="left:888.60px;top:583.00px;font-size:18.90px;color:#1b2135;letter-spacing:-0.160px;">Dav...</div>
<div class="r" style="left:975px;top:575.1419999999999px;width:129px;height:31.40000000000009px;background:#d2f4f6;border-radius:8px;"></div>
<div class="r" style="left:980.2px;top:580.942px;width:8.199999999999932px;height:19.799999999999955px;background:#3cc5c7;border-radius:4px;"></div>
<div class="t" style="left:997.00px;top:583.00px;font-size:18.90px;color:#1b2135;letter-spacing:0.080px;">In Progress</div>
<div class="t" style="left:1122.00px;top:583.00px;font-size:18.90px;color:#1b2135;letter-spacing:1.022px;">12/02/2024</div>
<div class="t" style="left:1321.40px;top:583.00px;font-size:18.90px;color:#1b2135;letter-spacing:0.400px;">1d</div>
<div class="t" style="left:1365.20px;top:583.00px;font-size:18.90px;color:#d92b44;letter-spacing:0.944px;">12/02/2024</div>
<div class="t" style="left:1505.00px;top:583.00px;font-size:18.90px;color:#1b2135;letter-spacing:0.200px;">Active</div>
<div class="t" style="left:386.10px;top:640.00px;font-size:16.72px;color:#55648a;letter-spacing:0.200px;">33</div>
<svg class="r" style="left:537px;top:637.749px;" width="17.5" height="17.5" viewBox="0 0 17.5 17.5" fill="none"><path d="M3 1.9 H15.2 Q16.2 1.9 16.2 2.9 V12.3 L12.6 15.9 H3 Q2 15.9 2 14.9 V2.9 Q2 1.9 3 1.9 Z M16.2 11.9 H11.6 V15.9" stroke="#1b2135" stroke-width="1.3" stroke-linejoin="round"/></svg>
<div class="t" style="left:568.50px;top:638.00px;font-size:18.90px;color:#1b2135;letter-spacing:0.427px;">3. Initial Draft of Content</div>
<svg class="r" style="left:845px;top:629.9490000000001px;" width="32" height="32" viewBox="0 0 32 32" fill="none"><defs><clipPath id="cd3"><rect x="0" y="0" width="32" height="32" rx="8"/></clipPath></defs><g clip-path="url(#cd3)"><rect width="32" height="32" fill="#b78664"/><rect x="0" y="0" width="6" height="32" fill="#a9754f"/><path d="M0 14 H7 V32 H0 Z M25 14 H32 V32 H25 Z" fill="#d3ab2c"/><ellipse cx="16" cy="17" rx="9" ry="11.5" fill="#e2b29d"/><path d="M7 12 C7 4 11 1.5 16 1.5 C21 1.5 25 4 25 12 C23 7 20 5.5 16 5.5 C12 5.5 9 7 7 12 Z" fill="#2e2522"/><rect x="8.5" y="11.5" width="6.5" height="4.5" rx="1.5" stroke="#5a5048" stroke-width="1.2" fill="none"/><rect x="17" y="11.5" width="6.5" height="4.5" rx="1.5" stroke="#5a5048" stroke-width="1.2" fill="none"/><path d="M11.5 21 Q16 25 20.5 21" stroke="#fff" stroke-width="1.6" fill="none"/><path d="M3 32 C5 28 10 27.5 16 28 C22 27.5 27 28 29 32 Z" fill="#1f1f1f"/></g></svg>
<div class="t" style="left:888.60px;top:638.00px;font-size:18.90px;color:#1b2135;letter-spacing:-0.360px;">Bra...</div>
<div class="r" style="left:975px;top:630.749px;width:71.5px;height:31.40000000000009px;background:#cbeefc;border-radius:8px;"></div>
<div class="r" style="left:980.2px;top:636.5490000000001px;width:8.199999999999932px;height:19.799999999999955px;background:#2e93d9;border-radius:4px;"></div>
<div class="t" style="left:997.00px;top:638.00px;font-size:18.90px;color:#1b2135;letter-spacing:0.300px;">New</div>
<div class="t" style="left:1122.00px;top:638.00px;font-size:18.90px;color:#1b2135;letter-spacing:1.022px;">19/02/2024</div>
<div class="t" style="left:1321.40px;top:638.00px;font-size:18.90px;color:#1b2135;letter-spacing:0.400px;">1d</div>
<div class="t" style="left:1365.20px;top:638.00px;font-size:18.90px;color:#d92b44;letter-spacing:0.944px;">19/02/2024</div>
<div class="t" style="left:1505.00px;top:638.00px;font-size:18.90px;color:#1b2135;letter-spacing:0.200px;">Active</div>
<div class="t" style="left:386.10px;top:696.00px;font-size:16.72px;color:#55648a;letter-spacing:0.200px;">34</div>
<svg class="r" style="left:537px;top:693.356px;" width="17.5" height="17.5" viewBox="0 0 17.5 17.5" fill="none"><path d="M3 1.9 H15.2 Q16.2 1.9 16.2 2.9 V12.3 L12.6 15.9 H3 Q2 15.9 2 14.9 V2.9 Q2 1.9 3 1.9 Z M16.2 11.9 H11.6 V15.9" stroke="#1b2135" stroke-width="1.3" stroke-linejoin="round"/></svg>
<div class="t" style="left:568.50px;top:694.00px;font-size:18.90px;color:#1b2135;letter-spacing:0.211px;">4. Request Graphics</div>
<svg class="r" style="left:845px;top:685.556px;" width="32" height="32" viewBox="0 0 32 32" fill="none"><defs><clipPath id="cd4"><rect x="0" y="0" width="32" height="32" rx="8"/></clipPath></defs><g clip-path="url(#cd4)"><rect width="32" height="32" fill="#dbe3ea"/><rect x="22" y="0" width="4" height="20" fill="#6e7a80"/><rect x="26" y="0" width="6" height="32" fill="#eef1f3"/><path d="M0 24 C4 20 9 21 12 24 L16 32 H0 Z" fill="#9fb4c6"/><ellipse cx="15" cy="9" rx="10" ry="7" fill="#3d2a20"/><ellipse cx="15.5" cy="15" rx="7.2" ry="9" fill="#c4967a"/><path d="M8.5 15 C9 23 12 27 15.5 27 C19 27 22 23 22.5 15 C21 20 19 21 15.5 21 C12 21 10 20 8.5 15 Z" fill="#3a2a22"/><path d="M12.5 21.5 Q15.5 23.5 18.5 21.5" stroke="#f2e6de" stroke-width="1.2" fill="none"/><path d="M20 10 C24 8 26 12 24 16" stroke="#7d7f80" stroke-width="2" fill="none"/><circle cx="25" cy="24" r="3" fill="#5aa04a"/><circle cx="28.5" cy="28" r="3" fill="#3f8a3a"/><circle cx="23" cy="30" r="2.5" fill="#6db35a"/></g></svg>
<div class="t" style="left:888.60px;top:694.00px;font-size:18.90px;color:#1b2135;letter-spacing:-0.160px;">Dav...</div>
<div class="r" style="left:975px;top:686.356px;width:129px;height:31.40000000000009px;background:#d2f4f6;border-radius:8px;"></div>
<div class="r" style="left:980.2px;top:692.1560000000001px;width:8.199999999999932px;height:19.799999999999955px;background:#3cc5c7;border-radius:4px;"></div>
<div class="t" style="left:997.00px;top:694.00px;font-size:18.90px;color:#1b2135;letter-spacing:0.080px;">In Progress</div>
<div class="t" style="left:1122.00px;top:694.00px;font-size:18.90px;color:#1b2135;letter-spacing:1.022px;">26/02/2024</div>
<div class="t" style="left:1321.40px;top:694.00px;font-size:18.90px;color:#1b2135;letter-spacing:0.400px;">1d</div>
<div class="t" style="left:1365.20px;top:694.00px;font-size:18.90px;color:#d92b44;letter-spacing:0.944px;">26/02/2024</div>
<div class="t" style="left:1505.00px;top:694.00px;font-size:18.90px;color:#1b2135;letter-spacing:0.200px;">Active</div>
<div class="t" style="left:386.10px;top:751.00px;font-size:16.72px;color:#55648a;letter-spacing:0.200px;">35</div>
<svg class="r" style="left:537px;top:748.963px;" width="17.5" height="17.5" viewBox="0 0 17.5 17.5" fill="none"><path d="M3 1.9 H15.2 Q16.2 1.9 16.2 2.9 V12.3 L12.6 15.9 H3 Q2 15.9 2 14.9 V2.9 Q2 1.9 3 1.9 Z M16.2 11.9 H11.6 V15.9" stroke="#1b2135" stroke-width="1.3" stroke-linejoin="round"/></svg>
<div class="t" style="left:568.50px;top:749.00px;font-size:18.90px;color:#1b2135;letter-spacing:0.383px;">5. Editing and Formatting</div>
<div class="r" style="left:975px;top:741.963px;width:71.5px;height:31.40000000000009px;background:#cbeefc;border-radius:8px;"></div>
<div class="r" style="left:980.2px;top:747.763px;width:8.199999999999932px;height:19.799999999999955px;background:#2e93d9;border-radius:4px;"></div>
<div class="t" style="left:997.00px;top:749.00px;font-size:18.90px;color:#1b2135;letter-spacing:0.300px;">New</div>
<div class="t" style="left:1122.00px;top:749.00px;font-size:18.90px;color:#1b2135;letter-spacing:1.022px;">01/03/2024</div>
<div class="t" style="left:1321.40px;top:749.00px;font-size:18.90px;color:#1b2135;letter-spacing:0.400px;">5d</div>
<div class="t" style="left:1365.20px;top:749.00px;font-size:18.90px;color:#d92b44;letter-spacing:0.944px;">07/03/2024</div>
<div class="t" style="left:1505.00px;top:749.00px;font-size:18.90px;color:#1b2135;letter-spacing:0.200px;">Active</div>
<div class="t" style="left:386.10px;top:807.00px;font-size:16.72px;color:#55648a;letter-spacing:0.200px;">36</div>
<svg class="r" style="left:537px;top:804.5699999999999px;" width="17.5" height="17.5" viewBox="0 0 17.5 17.5" fill="none"><path d="M3 1.9 H15.2 Q16.2 1.9 16.2 2.9 V12.3 L12.6 15.9 H3 Q2 15.9 2 14.9 V2.9 Q2 1.9 3 1.9 Z M16.2 11.9 H11.6 V15.9" stroke="#1b2135" stroke-width="1.3" stroke-linejoin="round"/></svg>
<div class="t" style="left:568.50px;top:805.00px;font-size:18.90px;color:#1b2135;letter-spacing:0.190px;">7. Blog/Email Creation</div>
<div class="r" style="left:975px;top:797.5699999999999px;width:71.5px;height:31.40000000000009px;background:#cbeefc;border-radius:8px;"></div>
<div class="r" style="left:980.2px;top:803.37px;width:8.199999999999932px;height:19.799999999999955px;background:#2e93d9;border-radius:4px;"></div>
<div class="t" style="left:997.00px;top:805.00px;font-size:18.90px;color:#1b2135;letter-spacing:0.300px;">New</div>
<div class="t" style="left:1122.00px;top:805.00px;font-size:18.90px;color:#1b2135;letter-spacing:1.022px;">08/03/2024</div>
<div class="t" style="left:1321.40px;top:805.00px;font-size:18.90px;color:#1b2135;letter-spacing:0.400px;">1d</div>
<div class="t" style="left:1365.20px;top:805.00px;font-size:18.90px;color:#d92b44;letter-spacing:0.944px;">08/03/2024</div>
<div class="t" style="left:1505.00px;top:805.00px;font-size:18.90px;color:#1b2135;letter-spacing:0.200px;">Active</div>
<div class="t" style="left:386.10px;top:862.00px;font-size:16.72px;color:#55648a;letter-spacing:0.200px;">37</div>
<svg class="r" style="left:537px;top:860.1769999999999px;" width="17.5" height="17.5" viewBox="0 0 17.5 17.5" fill="none"><path d="M3 1.9 H15.2 Q16.2 1.9 16.2 2.9 V12.3 L12.6 15.9 H3 Q2 15.9 2 14.9 V2.9 Q2 1.9 3 1.9 Z M16.2 11.9 H11.6 V15.9" stroke="#1b2135" stroke-width="1.3" stroke-linejoin="round"/></svg>
<div class="t" style="left:568.50px;top:861.00px;font-size:18.90px;color:#1b2135;letter-spacing:-0.021px;">6. Final Review</div>
<div class="r" style="left:975px;top:853.1769999999999px;width:71.5px;height:31.40000000000009px;background:#cbeefc;border-radius:8px;"></div>
<div class="r" style="left:980.2px;top:858.977px;width:8.199999999999932px;height:19.799999999999955px;background:#2e93d9;border-radius:4px;"></div>
<div class="t" style="left:997.00px;top:861.00px;font-size:18.90px;color:#1b2135;letter-spacing:0.300px;">New</div>
<div class="t" style="left:1365.20px;top:861.00px;font-size:18.90px;color:#d92b44;letter-spacing:0.944px;">12/03/2024</div>
<div class="t" style="left:1505.00px;top:861.00px;font-size:18.90px;color:#1b2135;letter-spacing:0.200px;">Active</div>
<div class="t" style="left:386.10px;top:918.00px;font-size:16.72px;color:#55648a;letter-spacing:0.200px;">38</div>
<svg class="r" style="left:537px;top:915.7839999999999px;" width="17.5" height="17.5" viewBox="0 0 17.5 17.5" fill="none"><path d="M3 1.9 H15.2 Q16.2 1.9 16.2 2.9 V12.3 L12.6 15.9 H3 Q2 15.9 2 14.9 V2.9 Q2 1.9 3 1.9 Z M16.2 11.9 H11.6 V15.9" stroke="#1b2135" stroke-width="1.3" stroke-linejoin="round"/></svg>
<div class="t" style="left:568.50px;top:916.00px;font-size:18.90px;color:#1b2135;letter-spacing:0.287px;">8. Launch</div>
<div class="r" style="left:975px;top:908.7839999999999px;width:71.5px;height:31.40000000000009px;background:#cbeefc;border-radius:8px;"></div>
<div class="r" style="left:980.2px;top:914.584px;width:8.199999999999932px;height:19.799999999999955px;background:#2e93d9;border-radius:4px;"></div>
<div class="t" style="left:997.00px;top:916.00px;font-size:18.90px;color:#1b2135;letter-spacing:0.300px;">New</div>
<div class="t" style="left:1122.00px;top:916.00px;font-size:18.90px;color:#1b2135;letter-spacing:1.022px;">13/03/2024</div>
<div class="t" style="left:1321.40px;top:916.00px;font-size:18.90px;color:#1b2135;letter-spacing:0.400px;">8d</div>
<div class="t" style="left:1365.20px;top:916.00px;font-size:18.90px;color:#d92b44;letter-spacing:0.944px;">22/03/2024</div>
<div class="t" style="left:1505.00px;top:916.00px;font-size:18.90px;color:#1b2135;letter-spacing:0.200px;">Active</div>
<div class="t" style="left:386.10px;top:974.00px;font-size:16.72px;color:#55648a;letter-spacing:0.200px;">39</div>
<svg class="r" style="left:474px;top:975.5909999999999px;" width="14" height="9" viewBox="0 0 14 9" fill="none"><path d="M1.8 1.8 L7 7 L12.2 1.8" stroke="#55648a" stroke-width="1.4" stroke-linecap="round" stroke-linejoin="round"/></svg>
<svg class="r" style="left:503.5px;top:969.5909999999999px;" width="17" height="21" viewBox="0 0 17 21" fill="none"><rect x="1.5" y="2.4" width="14.1" height="16.4" rx="1.6" stroke="#1b2135" stroke-width="1.25"/><rect x="5" y="1" width="7.4" height="2" rx="0.7" stroke="#1b2135" stroke-width="1.2"/><path d="M4.5 9.3 H12.8 M4.5 11.8 H12.8" stroke="#1b2135" stroke-width="1.2"/></svg>
<div class="t" style="left:535.80px;top:972.00px;font-size:18.90px;color:#1b2135;-webkit-text-stroke:0.55px #1b2135;letter-spacing:0.625px;">Asset Request</div>
<div class="t" style="left:1122.00px;top:972.00px;font-size:18.90px;color:#1b2135;letter-spacing:1.022px;">16/01/2024</div>
<div class="t" style="left:1365.20px;top:972.00px;font-size:18.90px;color:#d92b44;letter-spacing:0.944px;">10/02/2024</div>
<div class="t" style="left:1505.00px;top:972.00px;font-size:18.90px;color:#1b2135;letter-spacing:0.200px;">Active</div>
<div class="t" style="left:386.10px;top:1029.00px;font-size:16.72px;color:#55648a;letter-spacing:0.200px;">40</div>
<svg class="r" style="left:537px;top:1026.998px;" width="17.5" height="17.5" viewBox="0 0 17.5 17.5" fill="none"><path d="M3 1.9 H15.2 Q16.2 1.9 16.2 2.9 V12.3 L12.6 15.9 H3 Q2 15.9 2 14.9 V2.9 Q2 1.9 3 1.9 Z M16.2 11.9 H11.6 V15.9" stroke="#1b2135" stroke-width="1.3" stroke-linejoin="round"/></svg>
<div class="r" style="left:567.5px;top:1015.6980000000001px;width:250.5px;height:40px;overflow:hidden;-webkit-mask-image:linear-gradient(90deg,#000 93%,transparent 100%);mask-image:linear-gradient(90deg,#000 93%,transparent 100%);"><div class="t" style="left:1px;top:10.80px;font-size:18.90px;color:#1b2135;letter-spacing:0.15px;">1.5 Pull Images</div></div>
<div class="t" style="left:1122.00px;top:1027.00px;font-size:18.90px;color:#1b2135;letter-spacing:1.022px;">17/01/2024</div>
<div class="t" style="left:1321.40px;top:1027.00px;font-size:18.90px;color:#1b2135;letter-spacing:0.400px;">1d</div>
<div class="t" style="left:1365.20px;top:1027.00px;font-size:18.90px;color:#1b2135;letter-spacing:0.944px;">17/01/2024</div>
<div class="t" style="left:1505.00px;top:1027.00px;font-size:18.90px;color:#1b2135;letter-spacing:0.325px;">Completed</div>
<div class="r" style="left:347px;top:1010px;width:1454px;height:30px;background:linear-gradient(180deg,rgba(30,30,60,0) 0%,rgba(30,30,60,0.015) 60%,rgba(30,30,60,0.06) 100%);"></div>
<div class="r" style="left:347px;top:1040px;width:1454px;height:51px;background:linear-gradient(180deg,#ffffff 0%,#fdfdfd 45%,#f3f3f5 100%);"></div>
<svg class="r" style="left:440.5px;top:1060px;" width="15" height="15" viewBox="0 0 15 15" fill="none"><path d="M7.5 0 V15 M0 7.5 H15" stroke="#1b2135" stroke-width="1.5"/></svg>
<div class="t" style="left:471.30px;top:1059.00px;font-size:18.90px;color:#1b2135;letter-spacing:-0.033px;">Item</div>
<svg class="r" style="left:520px;top:1058px;" width="34" height="18" viewBox="0 0 34 18" fill="none"><path d="M2 8 L6.5 3 L11 8" stroke="#8d98b4" stroke-width="1.4" fill="none" stroke-linecap="round" stroke-linejoin="round"/><path d="M23 2.5 L30.5 10 H26.5 V15.5 H19.5 V10 H15.5 Z" stroke="#8d98b4" stroke-width="1.4" fill="none" stroke-linejoin="round"/></svg>
<div class="t" style="left:555.00px;top:1059.00px;font-size:18.90px;color:#8d98b4;">N</div>
<div class="r" style="left:681px;top:931px;width:429px;height:139px;border:6px solid #10c95b;border-radius:12px;background:linear-gradient(180deg,#fff 0%,#fff 70%,#f7f7f9 100%);box-shadow:0 0 0 2px #fff,0 2px 14px 2px rgba(20,30,70,0.07);"></div>
<div class="r" style="left:618px;top:924px;width:63px;height:63px;border-radius:50%;background:rgba(18,200,92,0.2);"></div>
<div class="r" style="left:627.5px;top:933.5px;width:43px;height:43px;border-radius:50%;background:#12c95c;"></div>
<div class="t" style="left:643.00px;top:944.00px;font-size:23.26px;color:#fff;-webkit-text-stroke:1.1px #fff;">7</div>
<svg class="r" style="left:706px;top:956px;" width="42" height="55" viewBox="0 0 42 55" fill="none"><path d="M3 0 H29 L41 12 V52 C41 53.7 39.7 55 38 55 H3 C1.3 55 0 53.7 0 52 V3 C0 1.3 1.3 0 3 0 Z" fill="#43965a"/><path d="M29 0 L41 12 H31 C29.9 12 29 11.1 29 10 Z" fill="#7dcd8e"/></svg>
<div class="t" style="left:718.50px;top:972.00px;font-size:29.80px;color:#fff;-webkit-text-stroke:0.7px #fff;">X</div>
<div class="t" style="left:764.20px;top:957.00px;font-size:18.75px;color:#0f1428;-webkit-text-stroke:0.7px #0f1428;letter-spacing:0.833px;">Exporting Excel completed</div>
<div class="t" style="left:764.20px;top:984.00px;font-size:18.90px;color:#1b2135;letter-spacing:0.324px;">Click to download:</div>
<div class="t" style="left:764.20px;top:1011.00px;font-size:18.90px;color:#1f6fd1;letter-spacing:0.229px;">1. Creative Deliverables (Marketing)</div>
<div class="r" style="left:763.5px;top:1027.9px;width:310.0999999999999px;height:1.3999999999998636px;background:#1f6fd1;"></div>
<div class="t" style="left:764.20px;top:1038.00px;font-size:18.90px;color:#1f6fd1;letter-spacing:0.367px;">(export).xlsx</div>
<div class="r" style="left:763.5px;top:1055.2px;width:108.5px;height:1.2999999999999545px;background:#1f6fd1;"></div>
<svg class="r" style="left:1088px;top:943px;" width="18" height="18" viewBox="0 0 18 18" fill="none"><path d="M1.5 1.5 L16.5 16.5 M16.5 1.5 L1.5 16.5" stroke="#1b2135" stroke-width="1.5"/></svg>
<div class="r" style="left:0px;top:0px;width:1802px;height:1px;background:#111;"></div>
<div class="r" style="left:0px;top:0px;width:1px;height:1091px;background:#0a0505;"></div>
<div class="r" style="left:1801px;top:0px;width:1px;height:1091px;background:#000;"></div>
<div class="r" style="left:0px;top:1090px;width:1802px;height:1px;background:#000;"></div>
<div class="r" style="left:1800px;top:1px;width:1px;height:1089px;background:#fff;"></div>
</div></body></html>
